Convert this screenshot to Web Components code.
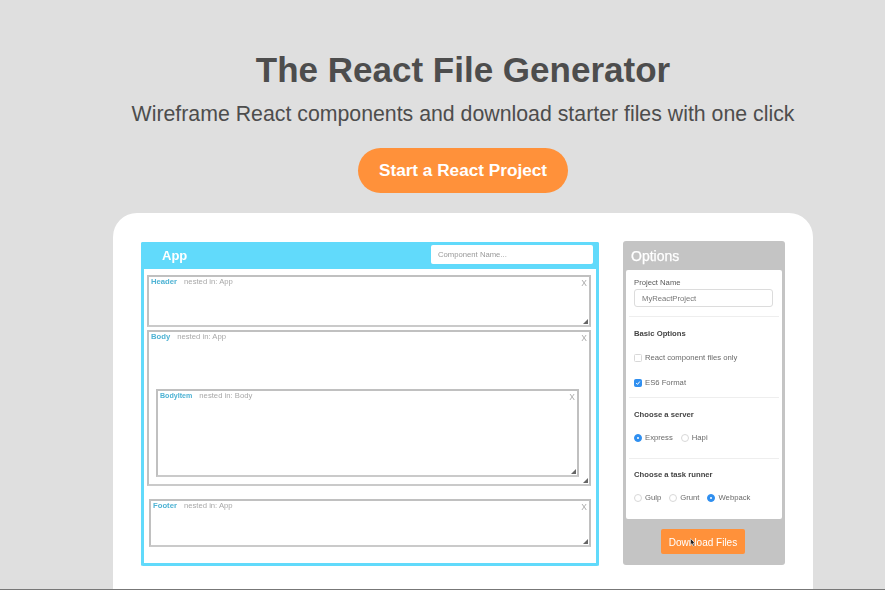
<!doctype html>
<html><head><meta charset="utf-8">
<style>
html,body{margin:0;height:590px;overflow:hidden;background:#dfdfdf;font-family:"Liberation Sans",Arial,sans-serif}
</style></head><body>
<rf-page>
  <rf-hero slot="hero" heading="The React File Generator" sub="Wireframe React components and download starter files with one click" cta="Start a React Project"></rf-hero>
  <rf-card slot="card">
    <rf-app slot="app" name="App">
      <rf-box name="Header" parent="App" style="height:52px"></rf-box>
      <rf-box name="Body" parent="App" style="height:156px;margin-top:3px">
        <rf-box name="BodyItem" parent="Body" variant="inner" style="height:88px;margin:46px 10px 0 7px"></rf-box>
      </rf-box>
      <rf-box name="Footer" parent="App" variant="footer" style="height:48px;margin:13px 0 0 2px"></rf-box>
    </rf-app>
    <rf-options slot="options"></rf-options>
  </rf-card>
</rf-page>
<script>
function def(name, css, html){
  customElements.define(name, class extends HTMLElement{
    connectedCallback(){
      if(this.shadowRoot) return;
      const r=this.attachShadow({mode:'open'});
      const get=k=>this.getAttribute(k)||'';
      r.innerHTML='<style>'+css+'</style>'+(typeof html==='function'?html(get):html);
    }
  });
}
def('rf-page',`
:host{display:block;width:926px;height:590px;position:relative;overflow:hidden}
.wrap{display:flex;flex-direction:column;align-items:center;padding-top:49px}
.rule{position:absolute;left:0;right:0;top:589px;height:1px;background:#777}
`,`<div class="wrap"><slot name="hero"></slot><slot name="card"></slot></div><div class="rule"></div>`);

def('rf-hero',`
:host{display:flex;flex-direction:column;align-items:center;color:#4d4d4d}
h1{margin:0;font-size:35px;line-height:42px;font-weight:700}
p{margin:10px 0 0;font-size:21.3px;line-height:26px;font-weight:400}
a{margin-top:21px;display:flex;align-items:center;justify-content:center;width:210px;height:45px;border-radius:23px;background:#ff913a;color:#fff;font-size:17.2px;font-weight:700}
`,g=>`<h1>${g('heading')}</h1><p>${g('sub')}</p><a>${g('cta')}</a>`);

def('rf-card',`
:host{display:flex;width:700px;height:400px;margin-top:20px;box-sizing:border-box;padding:28px 28px 0;background:#fff;border-radius:24px;gap:24px;align-items:flex-start;filter:blur(.45px)}
`,`<slot name="app"></slot><slot name="options"></slot>`);

def('rf-app',`
:host{display:block;width:458px;height:324px;margin-top:1px;box-sizing:border-box;border:3px solid #61dafb;border-top:0;border-radius:2px;background:#fff}
header{height:27px;margin:0 -3px;background:#61dafb;display:flex;align-items:center;justify-content:space-between;padding:0 6px 0 21px;border-radius:2px 2px 0 0}
b{color:#fff;font-size:13px}
.in{width:162px;height:19px;margin-bottom:2px;box-sizing:border-box;background:#fff;border-radius:2px;color:#999;font-size:7.7px;display:flex;align-items:center;padding-left:7px}
main{padding:6px 5px 0 3px}
`,g=>`<header><b>${g('name')}</b><div class="in">Component Name...</div></header><main><slot></slot></main>`);

def('rf-box',`
:host{display:block;box-sizing:border-box;border:2px solid #c0c0c0;border-bottom-color:#cacaca;background:#fff;position:relative}
.t{display:flex;gap:7px;padding:0 0 1px 2px;font-size:7.7px;line-height:10px;color:#a8a8a8}
.t b{color:#4fb3d4;font-weight:700}
:host([variant=inner]) .t b{font-size:7.1px}
.x{position:absolute;top:1px;right:2px;font-size:8.5px;line-height:10px;color:#aaa}
svg{position:absolute;right:1px;bottom:1px;width:5px;height:5px}
`,g=>`<div class="t"><b>${g('name')}</b><span>nested in: ${g('parent')}</span></div><span class="x">X</span><slot></slot><svg viewBox="0 0 5 5"><path d="M0 5L5 0V5Z" fill="#666"/></svg>`);

def('rf-options',`
:host{display:block;width:162px;height:324px;box-sizing:border-box;background:#c4c4c4;border-radius:3px;padding:0 3px;color:#5a5a5a;font-size:7.7px}
h2{margin:0;height:29px;padding:1px 0 0 5px;box-sizing:border-box;display:flex;align-items:center;color:#fff;font-size:14px;font-weight:400;-webkit-text-stroke:.25px #fff}
.panel{background:#fff;height:249px;border-radius:2px;box-sizing:border-box;padding:0 3px;display:flex;flex-direction:column}
section{padding:0 5px;border-bottom:1px solid #eee}
section:last-child{border:0}
label{display:block;line-height:9px}
.name{height:47px;padding-top:8px;box-sizing:border-box}
.field{margin-top:2px;height:18px;box-sizing:border-box;border:1px solid #dcdcdc;border-radius:3px;padding-left:7px;display:flex;align-items:center;color:#777;width:139px}
.head{font-weight:700;color:#444;line-height:10px}
.basic{height:81px;padding-top:12px;box-sizing:border-box}
.server{height:61px;padding-top:12px;box-sizing:border-box}
.runner{padding-top:11px}
.row{display:flex;align-items:center;gap:3px;color:#6a6a6a;line-height:10px}
.i{width:8px;height:8px;box-sizing:border-box;border:1px solid #d8d8d8;flex:none;background:#fff}
.c{border-radius:1.5px}
.r{border-radius:50%}
.on{background:#2f8ff0;border-color:#2f8ff0;position:relative}
.r.on::after{content:"";position:absolute;left:2px;top:2px;width:2px;height:2px;background:#fff;border-radius:50%}
.c.on svg{position:absolute;left:0;top:0;width:6px;height:6px}
.foot{display:flex;justify-content:center;padding-top:10px}
.btn{width:84px;height:25px;padding-top:1px;box-sizing:border-box;margin-left:-2px;background:#ff913a;border-radius:2px;color:#fff;font-size:10px;display:flex;align-items:center;justify-content:center;position:relative}
.cur{position:absolute;left:29px;top:9px;width:6px;height:9px}
`,`<h2>Options</h2>
<div class="panel">
<section class="name"><label>Project Name</label><div class="field">MyReactProject</div></section>
<section class="basic"><div class="head">Basic Options</div>
<div class="row" style="margin-top:14px"><i class="i c"></i><span>React component files only</span></div>
<div class="row" style="margin-top:15px"><i class="i c on"><svg viewBox="0 0 6 6"><path d="M1.2 3L2.5 4.4L4.8 1.5" fill="none" stroke="#fff" stroke-width="1"/></svg></i><span>ES6 Format</span></div></section>
<section class="server"><div class="head">Choose a server</div>
<div class="row" style="margin-top:13px"><i class="i r on"></i><span>Express</span><i class="i r" style="margin-left:5px"></i><span>Hapi</span></div></section>
<section class="runner"><div class="head">Choose a task runner</div>
<div class="row" style="margin-top:13px"><i class="i r"></i><span>Gulp</span><i class="i r" style="margin-left:5px"></i><span>Grunt</span><i class="i r on" style="margin-left:5px"></i><span>Webpack</span></div></section>
</div>
<div class="foot"><div class="btn">Download Files<svg class="cur" viewBox="0 0 6 9"><path d="M.5.5V7L2 5.6 3.2 8.2 4.4 7.6 3.2 5.2H5.2Z" fill="#222" stroke="#fff" stroke-width=".5"/></svg></div></div>`);
</script>
</body></html>
